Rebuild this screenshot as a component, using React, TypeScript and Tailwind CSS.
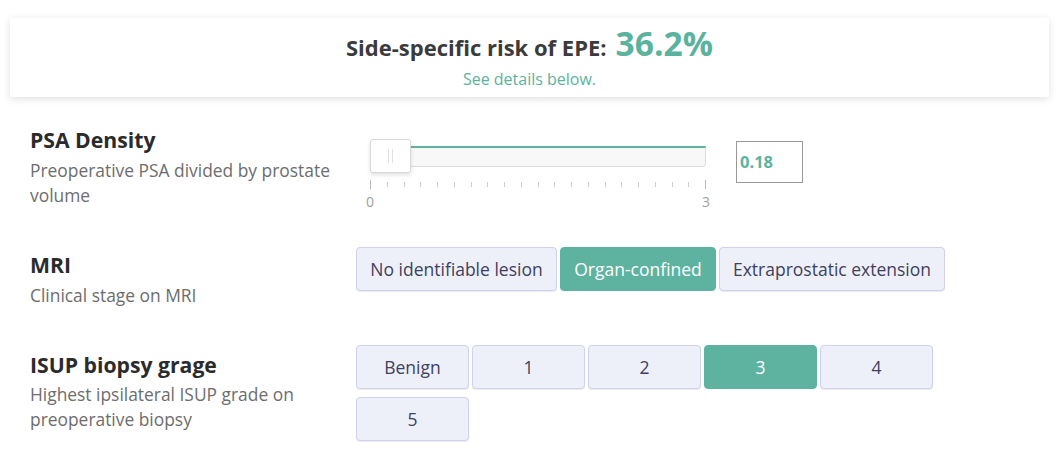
import React from "react";

const green = "text-[#5bb39e]";

const ticks = Array.from({ length: 21 }, (_, i) => i);

function OptionButton({ label, active, width }: { label: string; active?: boolean; width: string }) {
  return (
    <button
      className={`${width} h-[44px] rounded-[4px] border text-[17.5px] ${
        active
          ? "bg-[#5eb3a0] border-[#5eb3a0] text-white"
          : "bg-[#eef0f9] border-[#cfd1ef] text-[#3f3f5f] shadow-[0_1px_1px_rgba(0,0,0,0.08)]"
      }`}
    >
      {label}
    </button>
  );
}

function Label({ title, desc, gap }: { title: string; desc: string; gap: string }) {
  return (
    <div className="w-[356px] shrink-0 pl-[30px] pr-[24px]">
      <div className="text-[21.2px] font-bold leading-[26px] text-[#2b2b2b]">{title}</div>
      <div className={`${gap} text-[17.4px] leading-[25px] text-[#6d6d6d]`}>{desc}</div>
    </div>
  );
}

export default function App() {
  return (
    <div className="min-h-screen bg-white font-['Open_Sans',sans-serif]">
      <div className="pt-[18px] px-[10px]">
        <div className="h-[79px] pt-[7px] bg-white shadow-[0_2px_8px_rgba(0,0,0,0.12)] flex flex-col items-center">
          <div className="flex items-baseline gap-[9px] h-[36px]">
            <span className="text-[22px] font-bold text-[#3b3b3b]">Side-specific risk of EPE:</span>
            <span className={`text-[33.6px] font-bold ${green} leading-[36px]`}>36.2%</span>
          </div>
          <div className={`text-[16px] leading-[20px] ${green} mt-[8px]`}>See details below.</div>
        </div>
      </div>

      {/* PSA density */}
      <div className="flex mt-[30px]">
        <Label title="PSA Density" desc="Preoperative PSA divided by prostate volume" gap="mt-[5px]" />
        <div className="flex items-start pt-[12px]">
          <div className="ml-[14px] w-[336px]">
            <div className="relative h-[34px]">
              <div className="absolute left-0 right-0 top-[7px] h-[21px] rounded-[3px] border border-[#dcdcdc] bg-[#f8f8f8] shadow-[inset_0_1px_1px_#f0f0f0]">
                <div className="absolute left-[40px] right-[-1px] top-[-1px] h-[2px] rounded-r-[3px] bg-[#5eb3a0]" />
              </div>
              <div className="absolute left-0 top-0 w-[41px] h-[34px] rounded-[3px] border border-[#d9d9d9] bg-white shadow-[0_2px_4px_rgba(0,0,0,0.12)] flex items-center justify-center gap-[3px]">
                <div className="w-px h-[14px] bg-[#e2e2e2]" />
                <div className="w-px h-[14px] bg-[#e2e2e2]" />
              </div>
            </div>
            <div className="relative mt-[7px] h-[10px]">
              {ticks.map((i) => (
                <div
                  key={i}
                  className={`absolute w-px ${i === 0 || i === 20 ? "top-0 h-[9px] bg-[#bbb]" : "top-[2px] h-[5px] bg-[#ccc]"}`}
                  style={{ left: `${(i * 335) / 20}px` }}
                />
              ))}
            </div>
            <div className="flex justify-between text-[14px] leading-[16px] text-[#a0a0a0] -mx-[4px] mt-[4px]">
              <span>0</span>
              <span>3</span>
            </div>
          </div>
          <div className="ml-[30px] mt-[2px] w-[67px] h-[42px] border border-[#999] flex items-center pl-[3px]">
            <span className={`text-[16.5px] font-bold ${green}`}>0.18</span>
          </div>
        </div>
      </div>

      {/* MRI */}
      <div className="flex mt-[37px]">
        <div className="pt-[5px]">
          <Label title="MRI" desc="Clinical stage on MRI" gap="mt-[5px]" />
        </div>
        <div className="flex gap-[3px]">
          <OptionButton label="No identifiable lesion" width="w-[201px]" />
          <OptionButton label="Organ-confined" active width="w-[156px]" />
          <OptionButton label="Extraprostatic extension" width="w-[226px]" />
        </div>
      </div>

      {/* ISUP */}
      <div className="flex mt-[37px]">
        <div className="pt-[7px]">
          <Label title="ISUP biopsy grage" desc="Highest ipsilateral ISUP grade on preoperative biopsy" gap="mt-[4px]" />
        </div>
        <div className="grid grid-cols-[repeat(5,113px)] gap-x-[3px] gap-y-[8px] h-fit">
          {["Benign", "1", "2", "3", "4", "5"].map((l) => (
            <OptionButton key={l} label={l} active={l === "3"} width="w-[113px]" />
          ))}
        </div>
      </div>
    </div>
  );
}
